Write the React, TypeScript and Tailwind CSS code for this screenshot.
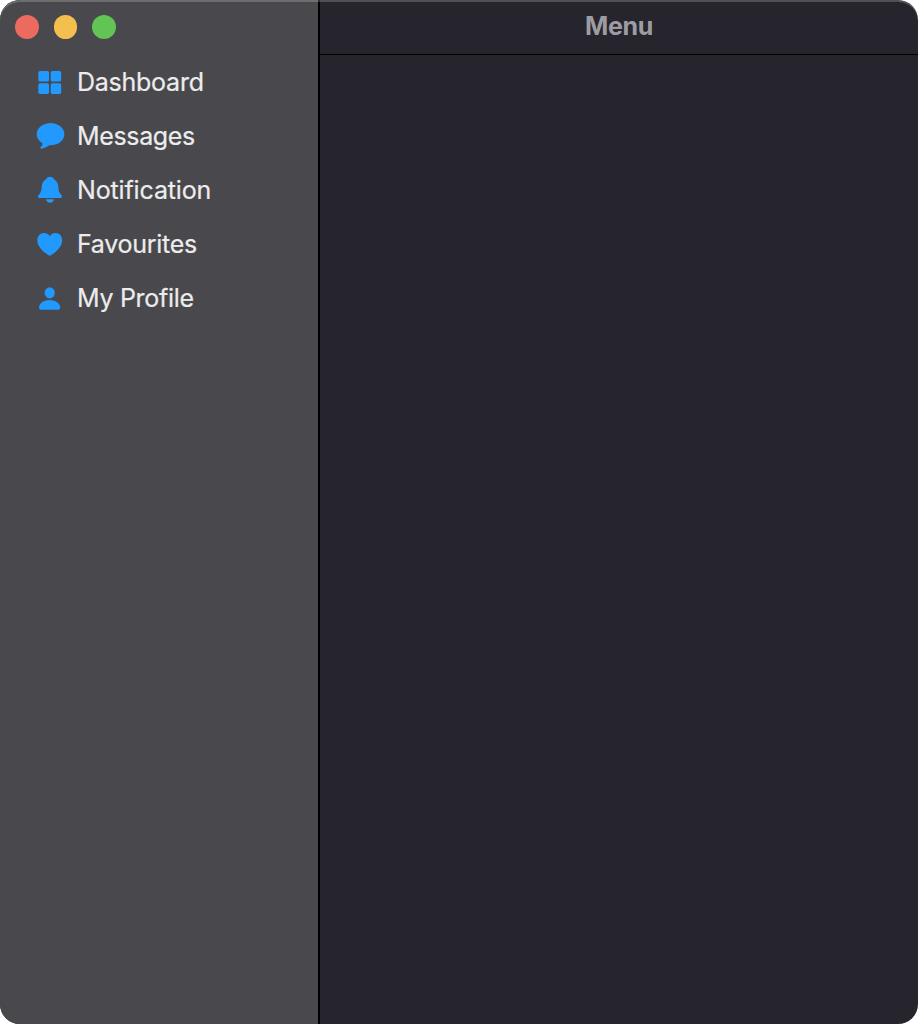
import type { ReactNode } from "react";

type MenuItem = { label: string; icon: ReactNode; tracking: string };

const items: MenuItem[] = [
  {
    label: "Dashboard",
    tracking: "tracking-[-0.25px]",
    icon: (
      <>
        <rect x="2.3" y="4" width="10.7" height="10.6" rx="1.7" />
        <rect x="14.7" y="4" width="10.5" height="10.6" rx="1.7" />
        <rect x="2.3" y="16.3" width="10.7" height="10.6" rx="1.7" />
        <rect x="14.7" y="16.3" width="10.5" height="10.6" rx="1.7" />
      </>
    ),
  },
  {
    label: "Messages",
    tracking: "tracking-[-0.35px]",
    icon: (
      <path d="M14.6 1.9C22.2 1.9 28.4 6.9 28.4 13.1S22.7 24 15.6 24.2C14.6 24.2 13.6 24.2 12.9 24.5C10.6 25.8 7.7 27.2 5.5 27.7C4.4 27.9 3.9 26.9 4.7 26.1C5.7 25.1 6.5 24 6.5 23C6.5 22.4 6.2 22 5.7 21.7C2.6 19.7 .7 16.9 .7 13.1C.7 6.9 6.9 1.9 14.6 1.9Z" />
    ),
  },
  {
    label: "Notification",
    tracking: "tracking-[-0.14px]",
    icon: (
      <>
        <path d="M14 1.7C16 1.7 17.6 2.8 18.1 4.4C20.9 5.9 22.2 8.4 22.3 11.6C22.4 15 22.8 16.6 24.1 18.5C25.1 19.8 26 20.5 26 21.5C26 22.5 25.3 23 24.1 23H3.9C2.7 23 2 22.5 2 21.5C2 20.5 2.9 19.8 3.9 18.5C5.2 16.6 5.6 15 5.7 11.6C5.8 8.4 7.1 5.9 9.9 4.4C10.4 2.8 12 1.7 14 1.7Z" />
        <path d="M10.1 24.3H17.9C17.7 26.4 16.1 27.7 14 27.7S10.3 26.4 10.1 24.3Z" />
      </>
    ),
  },
  {
    label: "Favourites",
    tracking: "tracking-[-0.28px]",
    icon: (
      <path d="M13.75 26.7C13.4 26.7 12.9 26.4 12.5 26.2C5.8 21.8 1.3 16.7 1.3 11.4C1.3 7.1 4.2 4 8 4C10.5 4 12.6 5.2 13.75 7.2C14.9 5.2 17 4 19.5 4C23.3 4 26.2 7.1 26.2 11.4C26.2 16.7 21.7 21.8 15 26.2C14.6 26.4 14.1 26.7 13.75 26.7Z" />
    ),
  },
  {
    label: "My Profile",
    tracking: "tracking-[-0.3px]",
    icon: (
      <>
        <ellipse cx="13.7" cy="9.9" rx="5.1" ry="5.6" />
        <path d="M13.6 17.1C20.4 17.1 24.2 21.4 24.2 24.5C24.2 26.1 23.2 26.8 21.4 26.8H5.8C4 26.8 3 26.1 3 24.5C3 21.4 6.8 17.1 13.6 17.1Z" />
      </>
    ),
  },
];

export default function App() {
  return (
    <div className="h-screen w-full bg-white font-['Inter',sans-serif]">
      <div className="relative flex h-full overflow-hidden rounded-[20px] bg-[#26252d]">
        <aside className="flex w-80 shrink-0 flex-col border-r-2 border-black bg-[#49484c]">
          <div className="flex h-[55px] shrink-0 items-center gap-[15px] pb-px pl-[15.2px]">
            <span className="size-[23.6px] rounded-full bg-[#ed6a5e]" />
            <span className="size-[23.6px] rounded-full bg-[#f5bf4f]" />
            <span className="size-[23.6px] rounded-full bg-[#61c454]" />
          </div>
          <nav>
            <ul>
              {items.map((item) => (
                <li key={item.label} className="flex h-[54px] items-center gap-[11px] pl-9">
                  <svg viewBox="0 0 30 30" className="size-[30px] shrink-0 fill-[#2299ff]" aria-hidden="true">
                    {item.icon}
                  </svg>
                  <span className={`text-[25px] leading-8 font-normal whitespace-nowrap text-[#ececed] [-webkit-text-stroke:0.2px_#ececed] ${item.tracking}`}>
                    {item.label}
                  </span>
                </li>
              ))}
            </ul>
          </nav>
        </aside>
        <main className="flex flex-1 flex-col">
          <header className="flex h-[55px] shrink-0 items-center justify-center border-b border-black pb-0.5">
            <h1 className="text-[25px] leading-8 font-bold tracking-[-0.3px] text-[#9d9ca3]">Menu</h1>
          </header>
        </main>
        <div className="pointer-events-none absolute inset-0 rounded-[20px] shadow-[inset_0_2px_0_rgba(255,255,255,0.2)]" />
      </div>
    </div>
  );
}
